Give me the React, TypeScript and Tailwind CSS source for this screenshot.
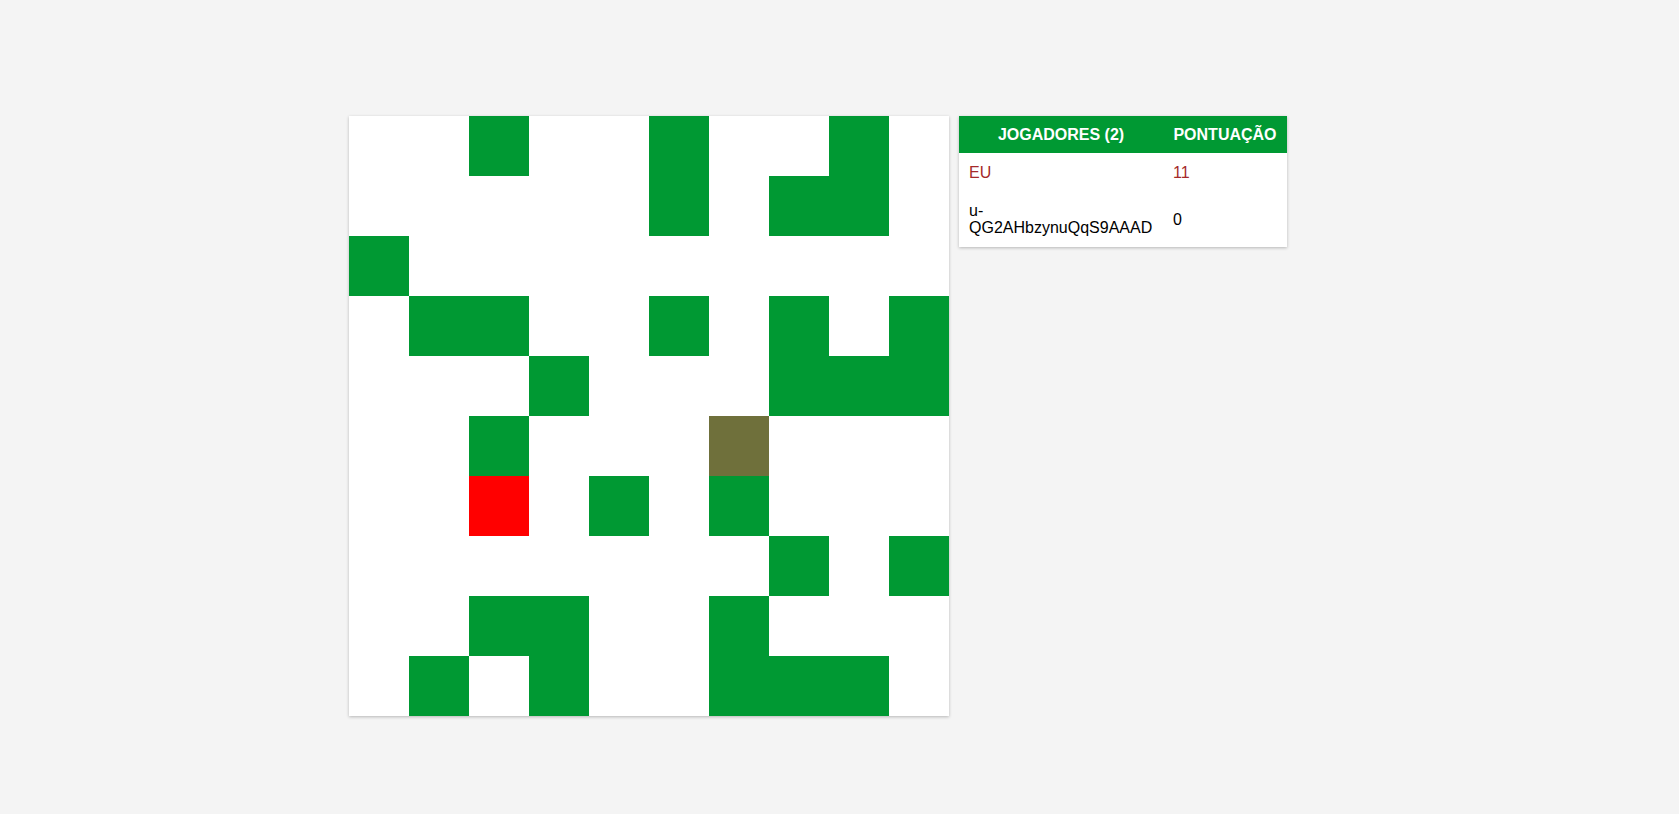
const BOARD = [
  "..G..G..G.",
  ".....G.GG.",
  "G.........",
  ".GG..G.G.G",
  "...G...GGG",
  "..G...O...",
  "..R.G.G...",
  ".......G.G",
  "..GG..G...",
  ".G.G..GGG.",
];

const cellClass: Record<string, string> = {
  ".": "bg-white",
  G: "bg-[#009933]",
  O: "bg-[#6f703b]",
  R: "bg-[#ff0000]",
};

const players = [
  { name: "EU", score: 11, me: true },
  { name: "u-QG2AHbzynuQqS9AAAD", score: 0, me: false },
];

export default function App() {
  return (
    <div className="min-h-screen bg-[#f4f4f4] font-['Liberation_Sans',Arial,sans-serif]">
      <div className="mx-auto flex w-[981px] items-start gap-[10px] pt-[116px]">
        {/* Board */}
        <div className="grid h-[600px] w-[600px] shrink-0 grid-cols-10 grid-rows-10 bg-white shadow-[0_1px_3px_rgba(0,0,0,0.25)]">
          {BOARD.map((row, y) =>
            row.split("").map((c, x) => (
              <div key={`${y}-${x}`} className={cellClass[c]} />
            ))
          )}
        </div>

        {/* Score table */}
        <table className="w-[328px] table-fixed border-collapse bg-white text-[16px] leading-[17px] shadow-[0_1px_3px_rgba(0,0,0,0.25)]">
          <colgroup>
            <col className="w-[204px]" />
            <col className="w-[124px]" />
          </colgroup>
          <thead>
            <tr className="h-[37px] bg-[#009933] text-white">
              <th className="px-[10px] text-center font-bold uppercase">Jogadores (2)</th>
              <th className="px-[10px] text-center font-bold uppercase">Pontuação</th>
            </tr>
          </thead>
          <tbody>
            {players.map((p) => (
              <tr
                key={p.name}
                className={p.me ? "h-[38px] text-[#a52a2a]" : "h-[56px] text-black"}
              >
                <td className="px-[10px] align-middle">{p.name}</td>
                <td className="px-[10px] align-middle">{p.score}</td>
              </tr>
            ))}
          </tbody>
        </table>
      </div>
    </div>
  );
}
